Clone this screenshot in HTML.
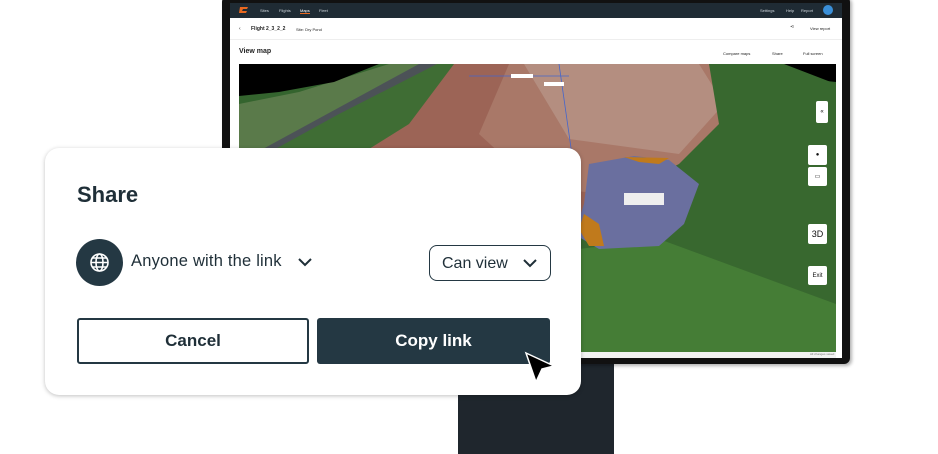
<!DOCTYPE html>
<html><head><meta charset="utf-8"><style>
*{margin:0;padding:0;box-sizing:border-box}
body{width:938px;height:454px;background:#fff;position:relative;overflow:hidden;font-family:"Liberation Sans",sans-serif}
.stand{position:absolute;left:458px;top:360px;width:156px;height:94px;background:#1f262d}
.bezel{position:absolute;left:222px;top:-4px;width:628px;height:368px;background:#111;border-radius:6px;box-shadow:2px 2px 3px rgba(0,0,0,.3)}
.screen{position:absolute;left:230px;top:3px;width:612px;height:355px;background:#fff;overflow:hidden}
.nav{height:15px;background:#1f2b34;position:relative;font-size:4px;color:#cfd6dc}
.nav span{position:absolute;top:5px}
.sub{height:22px;border-bottom:1px solid #eee;position:relative;font-size:5px;color:#222}
.hd{position:relative;height:24px;font-size:5px;color:#222}
.map{position:absolute;left:9px;top:61px;width:597px;height:288px}
.foot{position:absolute;left:9px;top:349px;width:597px;height:6px;background:#f2f2f2;font-size:3px;color:#777;text-align:right}
.mbtn{position:absolute;background:#fff;border-radius:2px;font-size:6px;color:#111;display:flex;align-items:center;justify-content:center}
.dlg{position:absolute;left:45px;top:148px;width:536px;height:247px;background:#fff;border-radius:14px;box-shadow:0 1px 4px rgba(0,0,0,.25)}
.dlg h1{position:absolute;left:32px;top:34px;font-size:22px;font-weight:bold;color:#1f2f38}
.globe{position:absolute;left:31px;top:91px;width:47px;height:47px;border-radius:50%;background:#243843}
.anyone{position:absolute;left:86px;top:104px;font-size:16.5px;color:#1f2f38;letter-spacing:.2px}
.canview{position:absolute;left:384px;top:97px;width:122px;height:36px;border:1.5px solid #243843;border-radius:8px;font-size:16px;color:#1f2f38;padding:9px 0 0 12px}
.btn{position:absolute;top:170px;height:46px;border-radius:3px;font-size:17px;font-weight:bold;display:flex;align-items:center;justify-content:center}
</style></head><body>
<div class="stand"></div>
<div class="bezel"></div>
<div class="screen">
 <div class="nav">
  <svg style="position:absolute;left:9px;top:3px" width="9" height="8"><path d="M1 1h8l-1 2H4l-1 2h5l-1 2H0z" fill="#e8681f"/></svg>
  <span style="left:30px">Sites</span><span style="left:49px">Flights</span><span style="left:70px;color:#fff;border-bottom:1px solid #e8681f">Maps</span><span style="left:89px">Fleet</span>
  <span style="left:530px">Settings</span><span style="left:556px">Help</span><span style="left:571px">Report</span>
  <div style="position:absolute;left:593px;top:2px;width:10px;height:10px;border-radius:50%;background:#3a8fd8"></div>
 </div>
 <div class="sub"><span style="position:absolute;left:9px;top:8px">‹</span><b style="position:absolute;left:21px;top:8px">Flight 2_3_2_2</b><span style="position:absolute;left:66px;top:9px;font-size:4px">Site: Dry Pond</span>
 <span style="position:absolute;left:580px;top:8px;font-size:4px">View report</span><span style="position:absolute;left:560px;top:6px">⋖</span></div>
 <div class="hd"><b style="position:absolute;left:9px;top:8px;font-size:7px">View map</b>
 <span style="position:absolute;left:493px;top:11px;font-size:4px">Compare maps</span><span style="position:absolute;left:542px;top:11px;font-size:4px">Share</span><span style="position:absolute;left:573px;top:11px;font-size:4px">Full screen</span></div>
 <svg class="map" viewBox="0 0 597 288">
  <rect width="597" height="288" fill="#34642e"/>
  <polygon points="0,40 60,28 150,0 200,0 130,50 30,90 0,100" fill="#5a7a4a"/>
  <polygon points="180,0 198,0 40,90 22,86" fill="#4c5257"/>
  <polygon points="198,0 470,0 480,60 450,100 340,150 300,180 250,200 150,180 60,100 40,92" fill="#9c6456"/>
  <polygon points="270,0 470,0 490,70 470,100 380,130 300,125 240,70" fill="#a97868"/>
  <polygon points="285,0 460,0 485,40 440,90 330,75" fill="#b48e80"/>
  <polygon points="198,0 100,50 0,105 0,140 90,110 170,60 215,0" fill="#3f6d34"/>
  <polygon points="0,0 140,0 95,18 40,28 0,32" fill="#000"/>
  <polygon points="545,0 597,0 597,18 560,14" fill="#000"/>
  <polygon points="470,0 545,0 597,20 597,288 0,288 0,200 120,170 300,180 360,140 440,100 480,60" fill="#38682f"/>
  <polygon points="0,210 300,190 420,175 597,240 597,288 0,288" fill="#457d36"/>
  <polygon points="350,100 395,92 430,96 460,120 445,160 420,182 360,185 335,170 345,140" fill="#6a6f9f"/>
  <polygon points="385,93 430,94 420,100 400,98" fill="#c07a1c"/>
  <polygon points="345,150 360,160 365,182 350,182 340,165" fill="#c07a1c"/>
  <line x1="230" y1="12" x2="330" y2="12" stroke="#4466cc" stroke-width=".8"/>
  <line x1="320" y1="0" x2="340" y2="140" stroke="#4466cc" stroke-width=".8"/>
  <rect x="272" y="10" width="22" height="4" fill="#fff"/><rect x="305" y="18" width="20" height="4" fill="#fff"/>
  <rect x="385" y="129" width="40" height="12" fill="#eee"/>
 </svg>
 <div class="mbtn" style="left:586px;top:98px;width:12px;height:22px">«</div>
 <div class="mbtn" style="left:578px;top:142px;width:19px;height:20px">●</div>
 <div class="mbtn" style="left:578px;top:164px;width:19px;height:19px">▭</div>
 <div class="mbtn" style="left:578px;top:221px;width:19px;height:20px;font-size:9px">3D</div>
 <div class="mbtn" style="left:578px;top:263px;width:19px;height:19px">Exit</div>
 <div class="foot">All changes saved&nbsp;&nbsp;</div>
</div>
<div class="dlg">
 <h1>Share</h1>
 <div class="globe"><svg width="47" height="47" viewBox="0 0 47 47" fill="none" stroke="#fff" stroke-width="1.6"><circle cx="23.5" cy="23.5" r="8.5"/><ellipse cx="23.5" cy="23.5" rx="3.5" ry="8.5"/><path d="M15 23.5h17M16.5 19h14M16.5 28h14"/></svg></div>
 <div class="anyone">Anyone with the link</div>
 <svg style="position:absolute;left:252px;top:109px" width="16" height="10"><path d="M2 2l6 6 6-6" fill="none" stroke="#1f2f38" stroke-width="2"/></svg>
 <div class="canview">Can view</div>
 <svg style="position:absolute;left:477px;top:110px" width="16" height="10"><path d="M2 2l6 6 6-6" fill="none" stroke="#1f2f38" stroke-width="2"/></svg>
 <div class="btn" style="left:32px;width:232px;border:2px solid #243843;color:#1f2f38">Cancel</div>
 <div class="btn" style="left:272px;width:233px;background:#243843;color:#fff">Copy link</div>
 <svg style="position:absolute;left:479px;top:203px" width="34" height="34"><path d="M2 2L30 15 18 18 12 31z" fill="#000" stroke="#fff" stroke-width="1.5"/></svg>
</div>
</body></html>
